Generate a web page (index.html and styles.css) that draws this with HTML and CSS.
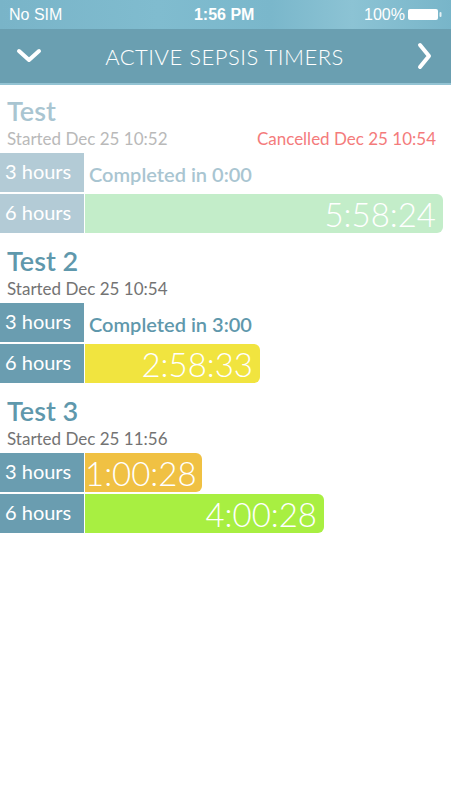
FILE: index.html
```html
<!DOCTYPE html>
<html lang="en">
<head>
  <meta charset="UTF-8">
  <meta name="viewport" content="width=device-width, initial-scale=1.0">
  <title>Active Sepsis Timers</title>
  <link rel="stylesheet" href="styles.css">
</head>
<body>
  <div class="status-bar">
    <span class="carrier">No SIM</span>
    <span class="clock">1:56 PM</span>
    <span class="battery">100%
      <svg width="36" height="13" viewBox="0 0 36 13">
        <rect x="1" y="1" width="30" height="11" rx="2" fill="#fff"/>
        <rect x="32.5" y="4" width="2" height="5" rx="1" fill="#fff" opacity="0.8"/>
      </svg>
    </span>
  </div>

  <!-- Navigation -->
  <div class="nav-bar">
    <svg class="nav-left" width="26" height="18" viewBox="0 0 26 18">
      <path d="M3 4 L13 13 L23 4" fill="none" stroke="#fff" stroke-width="4" stroke-linecap="round" stroke-linejoin="round"/>
    </svg>
    <h1>ACTIVE SEPSIS TIMERS</h1>
    <svg class="nav-right" width="18" height="28" viewBox="0 0 18 28">
      <path d="M5 3 L14 14 L5 25" fill="none" stroke="#fff" stroke-width="4" stroke-linecap="round" stroke-linejoin="round"/>
    </svg>
  </div>

  <div class="timer-list">
    <!-- Cancelled timer -->
    <div class="timer cancelled">
      <h2>Test</h2>
      <div class="meta">
        <span>Started Dec 25 10:52</span>
        <span class="cancel-note">Cancelled Dec 25 10:54</span>
      </div>
      <div class="row">
        <div class="label">3 hours</div>
        <div class="done">Completed in 0:00</div>
      </div>
      <div class="row">
        <div class="label">6 hours</div>
        <div class="bar green-pale" style="width: 358px;">5:58:24</div>
      </div>
    </div>

    <div class="timer">
      <h2>Test 2</h2>
      <div class="meta"><span>Started Dec 25 10:54</span></div>
      <div class="row">
        <div class="label">3 hours</div>
        <div class="done">Completed in 3:00</div>
      </div>
      <div class="row">
        <div class="label">6 hours</div>
        <div class="bar yellow" style="width: 175px;">2:58:33</div>
      </div>
    </div>

    <div class="timer">
      <h2>Test 3</h2>
      <div class="meta"><span>Started Dec 25 11:56</span></div>
      <div class="row">
        <div class="label">3 hours</div>
        <div class="bar orange" style="width: 117px;">1:00:28</div>
      </div>
      <div class="row">
        <div class="label">6 hours</div>
        <div class="bar lime" style="width: 239px;">4:00:28</div>
      </div>
    </div>
  </div>
</body>
</html>
```

FILE: styles.css
```css
body {
  margin: 0;
  font-family: 'Lato', 'Noto Sans', sans-serif;
  background: #fff;
  color: #333;
}
.status-bar {
  height: 29px;
  display: flex;
  align-items: center;
  justify-content: space-between;
  padding: 0 9px;
  background: linear-gradient(90deg, #79b4c8 0%, #80bccf 35%, #7ab7cb 60%, #8cc3d4 78%, #78b5c9 100%);
  color: #fff;
  font-family: 'Liberation Sans', Arial, sans-serif;
  font-size: 16px;
}
.status-bar .clock {
  font-weight: bold;
  margin-left: 22px;
}
.status-bar .battery {
  display: flex;
  align-items: center;
  gap: 2px;
  margin-right: -1px;
}
.nav-bar {
  height: 54px;
  display: grid;
  grid-template-columns: 1fr auto 1fr;
  align-items: center;
  padding: 0 18px 0 16px;
  background: #6a9fb1;
  border-bottom: 2px solid #93c3d3;
}
.nav-right {
  justify-self: end;
}
.nav-bar h1 {
  margin: 0;
  font-size: 22px;
  font-weight: 300;
  color: #fff;
  letter-spacing: 0.5px;
}
.timer-list {
  padding-top: 8px;
}
.timer {
  padding-bottom: 8px;
}
.timer h2 {
  margin: 0;
  padding-left: 7px;
  height: 36px;
  line-height: 36px;
  font-size: 27px;
  font-weight: 600;
  color: #5f98ac;
}
.meta {
  display: flex;
  justify-content: space-between;
  height: 20px;
  line-height: 20px;
  padding: 0 15px 0 7px;
  margin-bottom: 4px;
  font-size: 17px;
  color: #737373;
}
.row {
  display: flex;
  height: 39px;
  margin-bottom: 2px;
}
.label {
  width: 84px;
  flex-shrink: 0;
  padding-left: 5px;
  box-sizing: border-box;
  background: #6a9db0;
  color: #fff;
  font-size: 20px;
  font-weight: 400;
  line-height: 37px;
}
.done {
  padding: 4px 0 0 5px;
  font-size: 20px;
  font-weight: 600;
  color: #5f98ac;
  line-height: 35px;
}
.bar {
  margin-left: 1px;
  border-radius: 0 6px 6px 0;
  text-align: right;
  padding-right: 7px;
  box-sizing: border-box;
  color: #fff;
  font-size: 33px;
  font-weight: 300;
  line-height: 40px;
}
.green-pale { background: #c3edc9; }
.yellow { background: #f1e43f; }
.orange { background: #f0c143; }
.lime { background: #a8ef41; }

.cancelled h2,
.cancelled .done { color: #a9c5d1; }
.cancelled .meta { color: #b9b9b9; }
.cancelled .label { background: #b3cbd6; }
.cancelled .cancel-note { color: #f47b7b; }
```
